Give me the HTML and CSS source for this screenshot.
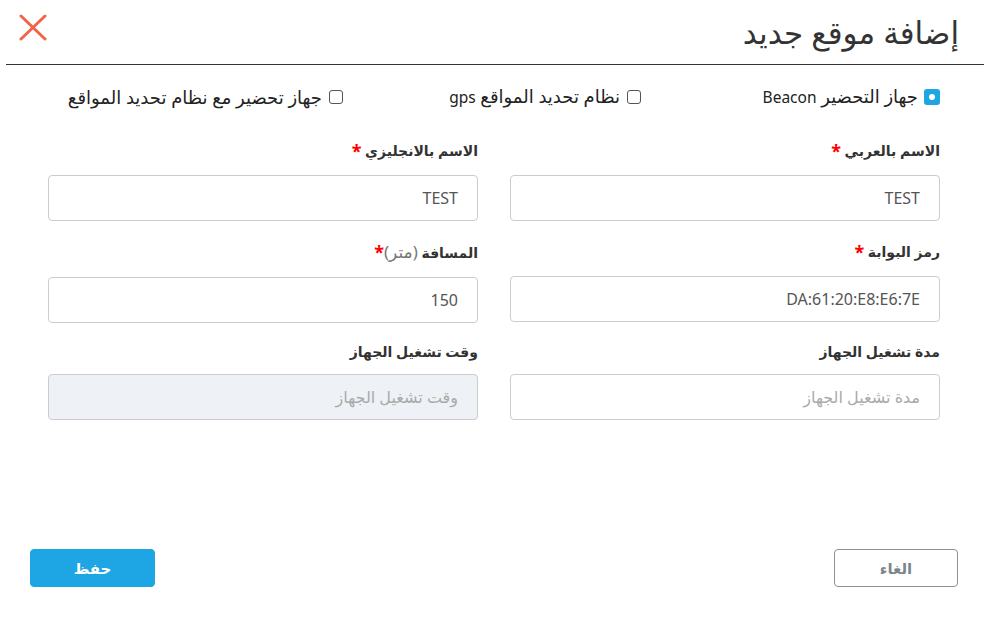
FILE: index.html
```html
<!DOCTYPE html>
<html lang="ar" dir="rtl">
<head>
<meta charset="utf-8">
<title>إضافة موقع جديد</title>
<link rel="stylesheet" href="styles.css">
</head>
<body>
<div class="modal">
  <header class="modal-header">
    <h1 class="title">إضافة موقع جديد</h1>
    <button class="close" aria-label="close">
      <svg width="28" height="28" viewBox="0 0 28 28"><path d="M2 3 L26 26 M26 3 L2 26" stroke="#f2644a" stroke-width="3" stroke-linecap="round" fill="none"/></svg>
    </button>
  </header>

  <div class="options">
    <label class="option"><span class="radio on"><span class="dot"></span></span><span>جهاز التحضير <span class="latin">Beacon</span></span></label>
    <label class="option"><span class="check"></span><span>نظام تحديد المواقع <span class="latin">gps</span></span></label>
    <label class="option"><span class="check"></span><span>جهاز تحضير مع نظام تحديد المواقع</span></label>
  </div>

  <div class="form">
    <div class="field">
      <div class="label req">الاسم بالعربي <span class="star">*</span></div>
      <div class="input">TEST</div>
    </div>
    <div class="field">
      <div class="label req">الاسم بالانجليزي <span class="star">*</span></div>
      <div class="input">TEST</div>
    </div>
    <div class="field">
      <div class="label req">رمز البوابة <span class="star">*</span></div>
      <div class="input ltr">DA:61:20:E8:E6:7E</div>
    </div>
    <div class="field">
      <div class="label req">المسافة <span class="unit">(متر)</span><span class="star">*</span></div>
      <div class="input">150</div>
    </div>
    <div class="field">
      <div class="label">مدة تشغيل الجهاز</div>
      <div class="input placeholder">مدة تشغيل الجهاز</div>
    </div>
    <div class="field">
      <div class="label">وقت تشغيل الجهاز</div>
      <div class="input placeholder disabled">وقت تشغيل الجهاز</div>
    </div>
  </div>

  <footer class="footer">
    <button class="btn cancel">الغاء</button>
    <button class="btn save">حفظ</button>
  </footer>
</div>
</body>
</html>
```

FILE: styles.css
```css
* { box-sizing: border-box; }
html, body { margin: 0; padding: 0; background: #fff; }
body {
  font-family: "Noto Sans", "DejaVu Sans", sans-serif;
  color: #333;
  width: 989px;
  height: 620px;
  overflow: hidden;
}
.modal { width: 989px; }

.modal-header {
  display: flex;
  justify-content: space-between;
  align-items: center;
  height: 65px;
  margin: 0 5px 0 6px;
  padding: 0 25px 0 13px;
  border-bottom: 1px solid #333;
}
.title {
  margin: 0;
  font-size: 31px;
  font-weight: 400;
  color: #333;
  line-height: 40px;
}
.close {
  border: 0;
  background: none;
  padding: 0;
  width: 28px;
  height: 28px;
  display: block;
  cursor: pointer;
  margin-top: -10px;
}
.close svg { display: block; }

.options {
  display: grid;
  grid-template-columns: repeat(3, 298px);
  padding: 0 49px 0 0;
  margin-top: 19px;
  height: 24px;
  align-items: center;
}
.option {
  display: flex;
  align-items: center;
  gap: 6px;
  font-size: 18px;
  color: #222;
  line-height: 24px;
  white-space: nowrap;
}
.option .latin { font-size: 15.5px; }
.radio {
  width: 16px;
  height: 16px;
  border-radius: 3px;
  background: #1ea5e3;
  display: flex;
  align-items: center;
  justify-content: center;
  flex: none;
}
.radio .dot {
  width: 6px;
  height: 6px;
  border-radius: 50%;
  background: #fff;
}
.check {
  width: 14px;
  height: 14px;
  border: 1px solid #555;
  border-radius: 3px;
  background: #fff;
  flex: none;
  margin: 0 1px;
}

.form {
  display: grid;
  grid-template-columns: 430px 430px;
  column-gap: 32px;
  row-gap: 17px;
  padding: 0 49px 0 48px;
  margin-top: 29px;
}
.label {
  font-size: 14px;
  font-weight: 700;
  color: #333;
  line-height: 24px;
  margin-bottom: 10px;
}
.label.req { line-height: 28px; }
.star {
  color: #f00;
  font-size: 18px;
  font-weight: 700;
  vertical-align: top;
}
.unit { font-weight: 400; color: #777; font-size: 17px; }
.input {
  height: 46px;
  border: 1px solid #ccc;
  border-radius: 4px;
  padding: 0 19px;
  display: flex;
  align-items: center;
  font-size: 16px;
  color: #555;
  background: #fff;
}
.input.ltr { direction: ltr; justify-content: flex-end; }
.input.placeholder { color: #aaa; font-size: 16px; }
.input.disabled { background: #eef1f5; }

.footer {
  display: flex;
  justify-content: space-between;
  padding: 0 31px 0 30px;
  margin-top: 129px;
}
.btn {
  height: 38px;
  border-radius: 4px;
  font-family: inherit;
  font-size: 15px;
  font-weight: 700;
  cursor: pointer;
}
.cancel {
  width: 124px;
  background: #fff;
  border: 1px solid #8a9399;
  color: #7c868d;
}
.save {
  width: 125px;
  background: #1ea5e3;
  border: 1px solid #1ea5e3;
  color: #fff;
}
```
